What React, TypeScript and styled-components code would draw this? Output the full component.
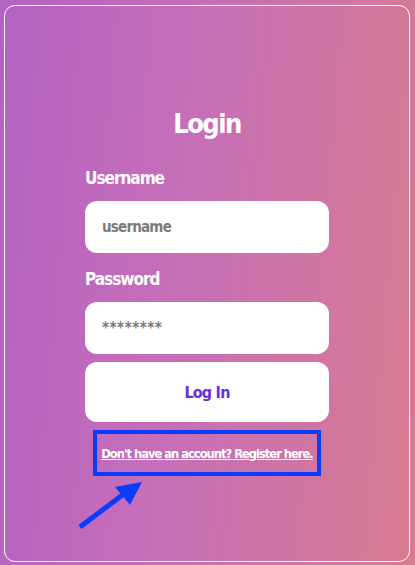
import styled, { createGlobalStyle } from "styled-components"

const Global = createGlobalStyle`
    html, body {
        margin: 0;
        height: 100%;
    }
    body {
        background: linear-gradient(95deg, #b462c3 0%, #c76fb7 45%, #d77b8f 100%);
        font-family: "DejaVu Sans Condensed", "DejaVu Sans", sans-serif;
        font-stretch: condensed;
    }
`

const Card = styled.div`
    box-sizing: border-box;
    margin: 5px 5px 0 4px;
    height: 557px;
    border: 1.5px solid #ffffff;
    border-radius: 11px;
    display: flex;
    flex-direction: column;
    align-items: center;
    padding-top: 102px;
    position: relative;
`

const Title = styled.h1`
    margin: 0 0 29px;
    color: #fff;
    font-size: 27px;
    font-weight: 700;
    letter-spacing: -1.5px;
`

const Form = styled.form`
    width: 244px;
    display: flex;
    flex-direction: column;
`

const Label = styled.label`
    color: #fff;
    font-size: 17px;
    font-weight: 700;
    letter-spacing: -1px;
    margin-bottom: 12px;
    line-height: 21px;
`

const Input = styled.input<{ $gap?: number; $spacing?: number }>`
    box-sizing: border-box;
    width: 100%;
    height: 52px;
    border: none;
    border-radius: 12px;
    background: #fff;
    padding: 0 17px;
    font-family: inherit;
    font-stretch: condensed;
    font-size: 15px;
    font-weight: 700;
    letter-spacing: ${(p) => p.$spacing ?? -0.8}px;
    color: #333;
    outline: none;
    margin-bottom: ${(p) => p.$gap ?? 16}px;
    &::placeholder {
        color: #7a7a7a;
    }
`

const Button = styled.button`
    height: 60px;
    border: none;
    border-radius: 12px;
    background: #fff;
    color: #6a2fdc;
    font-family: inherit;
    font-stretch: condensed;
    font-size: 16px;
    font-weight: 700;
    letter-spacing: -0.8px;
    cursor: pointer;
`

const LinkBox = styled.div`
    align-self: center;
    margin-top: 8px;
    border: 4px solid #0a3cff;
    padding: 10px 4px;
    white-space: nowrap;
    line-height: 17px;
`

const RegisterLink = styled.a`
    color: #fff;
    font-size: 12.8px;
    font-weight: 700;
    letter-spacing: -1px;
    text-decoration: underline;
    cursor: pointer;
`

const Arrow = styled.svg`
    position: absolute;
    left: 60px;
    top: 460px;
`

export default function App() {
    return (
        <>
            <Global />
            <Card>
                <Title>Login</Title>
                <Form>
                    <Label>Username</Label>
                    <Input placeholder="username" />
                    <Label>Password</Label>
                    <Input type="password" placeholder="********" $gap={8} $spacing={0.5} />
                    <Button type="button">Log In</Button>
                    <LinkBox>
                        <RegisterLink>Don't have an account? Register here.</RegisterLink>
                    </LinkBox>
                </Form>
                <Arrow width="90" height="70" viewBox="0 0 90 70">
                    <line x1="15" y1="61" x2="60" y2="27" stroke="#0a3cff" strokeWidth="5" />
                    <polygon points="50,21 77,16 65,39" fill="#0a3cff" />
                </Arrow>
            </Card>
        </>
    )
}
